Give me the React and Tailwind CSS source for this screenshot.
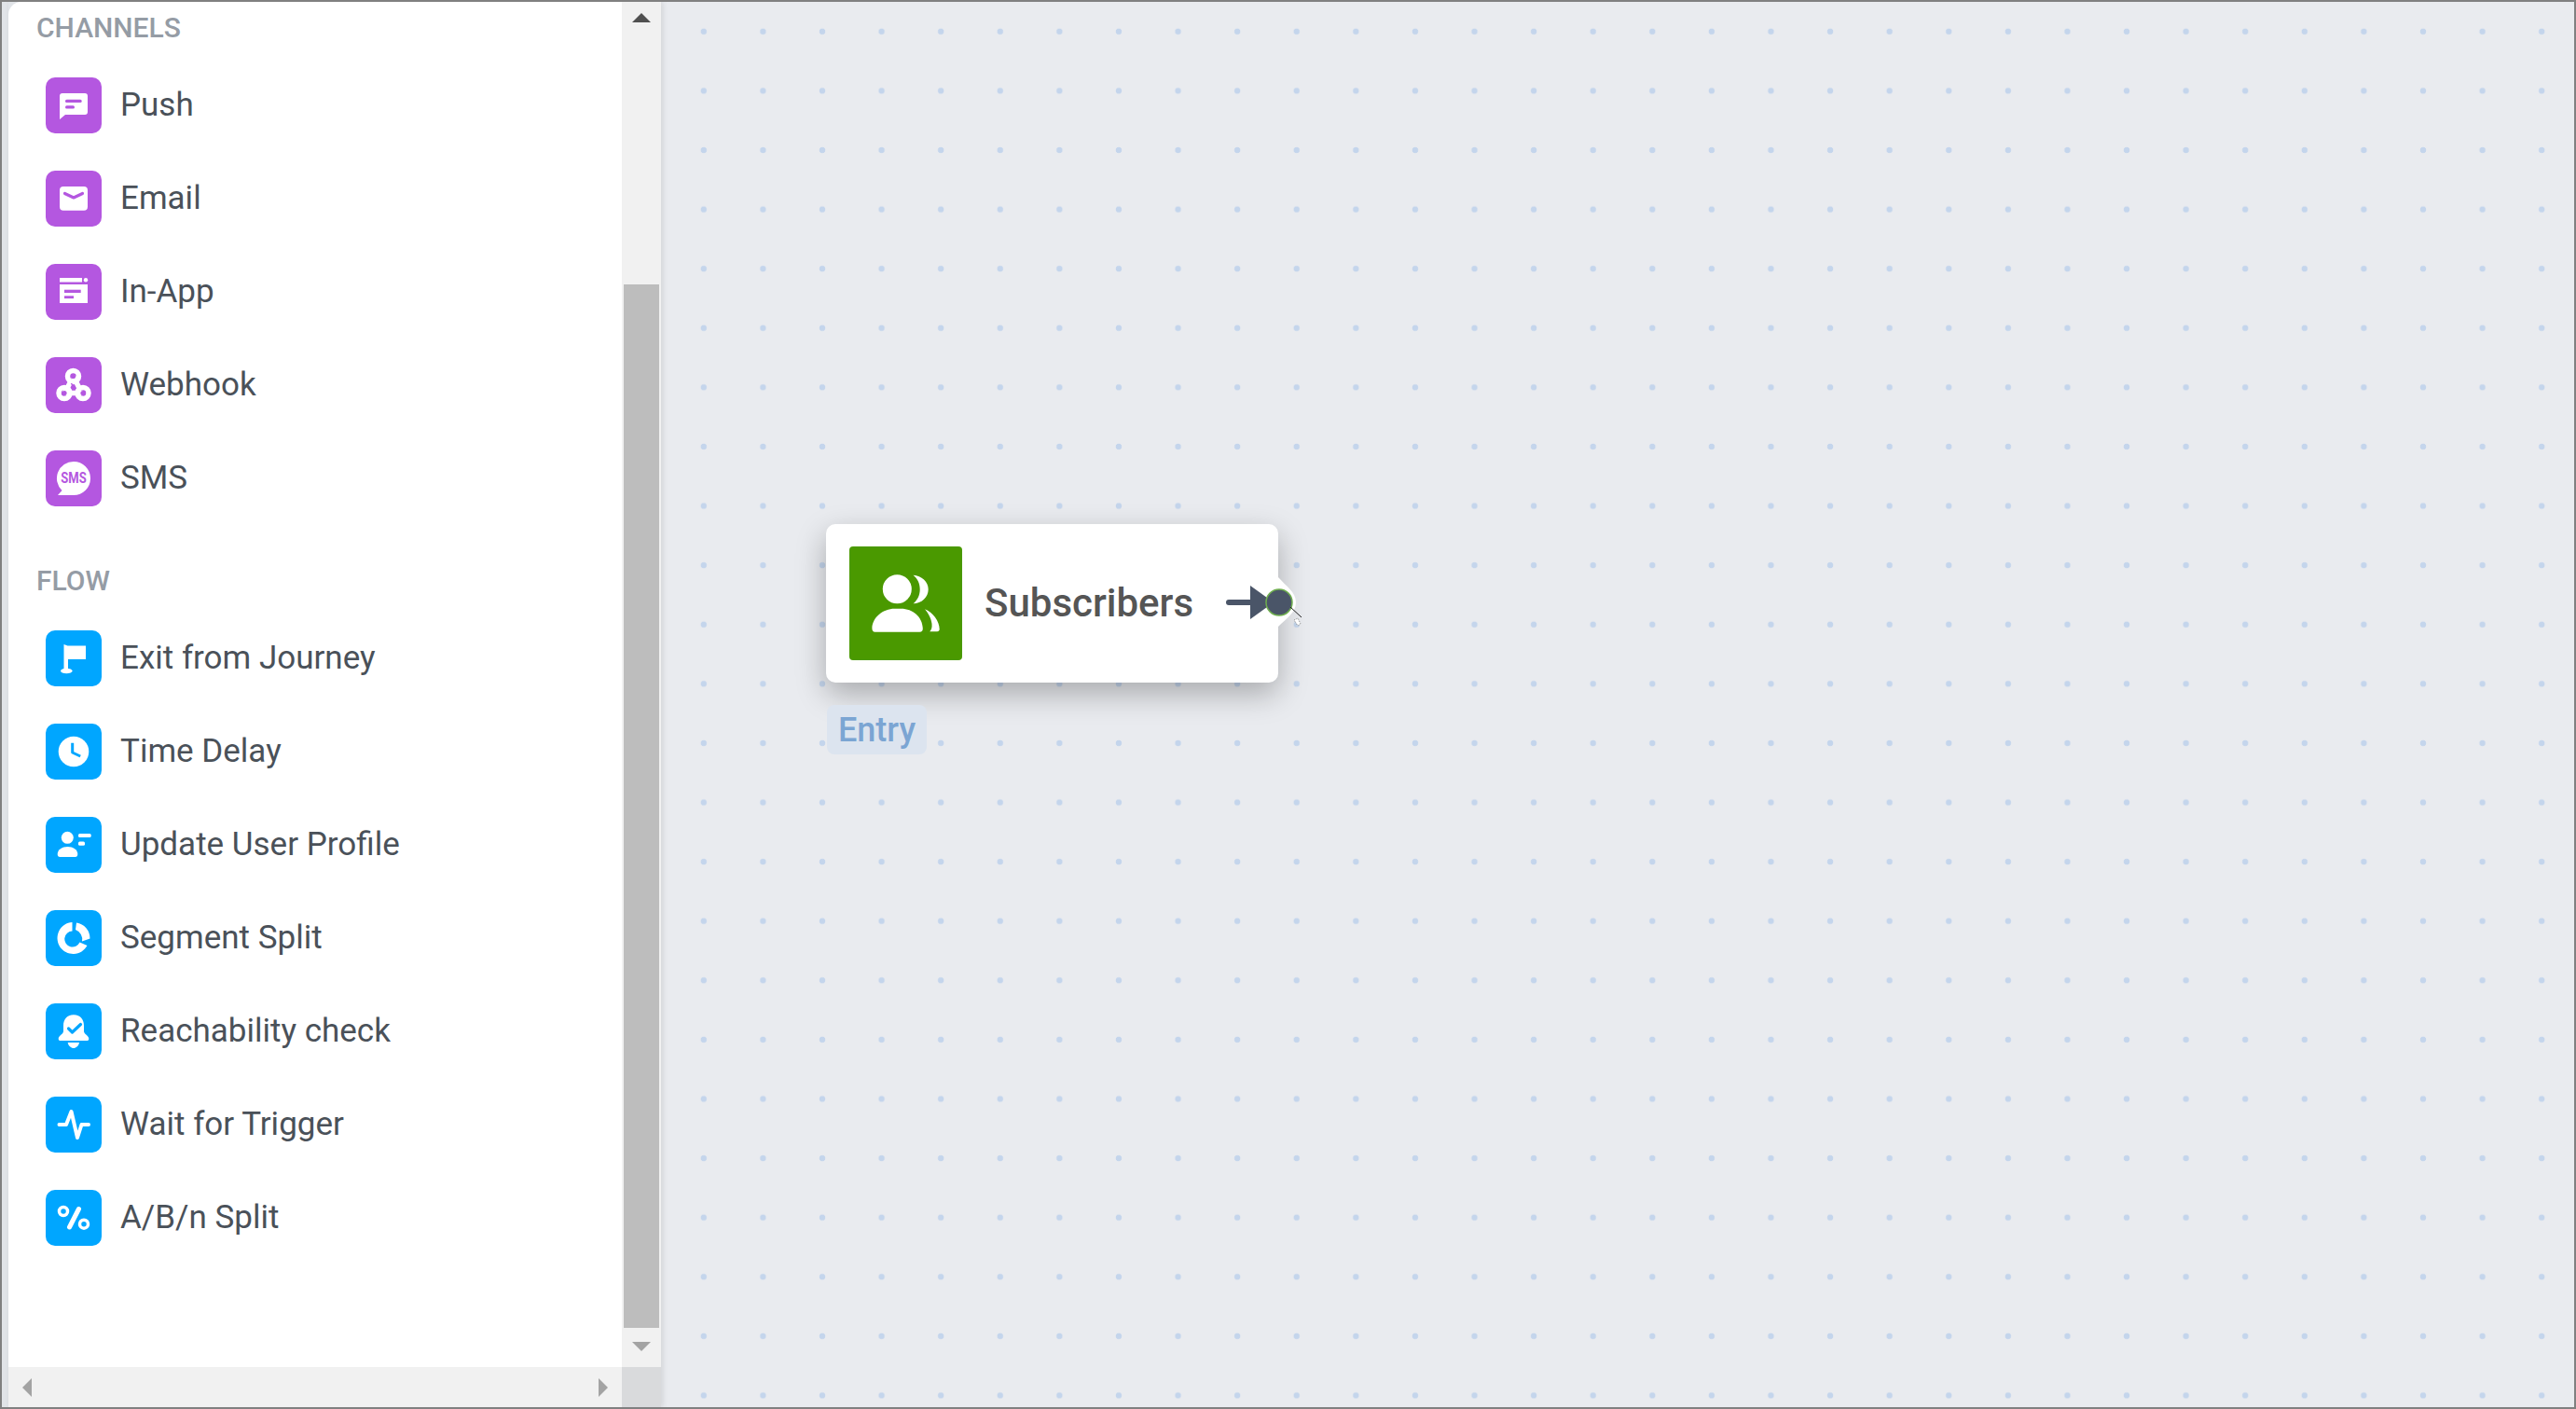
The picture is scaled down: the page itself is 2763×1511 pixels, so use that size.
const P = "#b457e0";
const B = "#00a6ff";

function Ico({ children }) {
  return (
    <svg viewBox="0 0 60 60" width="60" height="60" className="block">
      {children}
    </svg>
  );
}

const PushI = () => (
  <Ico>
    <path d="M15 20a3 3 0 0 1 3-3h24a3 3 0 0 1 3 3v17a3 3 0 0 1-3 3H21l-6 5z" fill="#fff" />
    <rect x="21" y="23.700" width="17.700" height="3.300" rx="1.600" fill={P} />
    <rect x="21" y="30.300" width="10" height="3.300" rx="1.600" fill={P} />
  </Ico>
);
const EmailI = () => (
  <Ico>
    <rect x="15" y="17" width="30" height="25.700" rx="4" fill="#fff" />
    <path d="M20.500 24.500l9.500 4.500 9.500-4.500" fill="none" stroke={P} strokeWidth="3.200" strokeLinecap="round" strokeLinejoin="round" />
  </Ico>
);
const InAppI = () => (
  <Ico>
    <rect x="15" y="15" width="24" height="4.500" fill="#fff" />
    <circle cx="43" cy="17.200" r="2.200" fill="#fff" />
    <rect x="15" y="22" width="30" height="20" fill="#fff" />
    <rect x="20" y="27.700" width="17.700" height="3.300" fill={P} />
    <rect x="20" y="34.300" width="10" height="2.800" fill={P} />
  </Ico>
);
const WebhookI = () => (
  <Ico>
    <g fill="none" stroke="#fff" strokeWidth="5.500">
      <circle cx="29.500" cy="20.500" r="6" />
      <circle cx="20" cy="38.500" r="6" />
      <circle cx="40" cy="38.500" r="6" />
      <path d="M27 26L20 38.500" />
      <path d="M20 38.500H40" />
      <path d="M29.500 20.500L36 33" />
    </g>
    <path d="M30.500 33.500L27.500 28" fill="none" stroke={P} strokeWidth="1.500" />
    <circle cx="29.500" cy="20.500" r="2.600" fill={P} />
    <circle cx="20" cy="38.500" r="2.600" fill={P} />
    <circle cx="40" cy="38.500" r="2.600" fill={P} />
  </Ico>
);
const SmsI = () => (
  <div className="relative w-[60px] h-[60px]">
    <Ico>
      <path d="M30 12a18 18 0 0 1 0 36H13l4.500-5A18 18 0 0 1 30 12z" fill="#fff" />
    </Ico>
    <span className="absolute inset-x-0 top-[22px] text-center text-[13px] leading-[16px] font-bold scale-y-[1.3] font-['Roboto',sans-serif] text-[#b457e0]">SMS</span>
  </div>
);
const FlagI = () => (
  <Ico>
    <path d="M19.500 15l4 1.500H43V31H24V42h-4.500z" fill="#fff" />
    <ellipse cx="22.300" cy="43.500" rx="6.300" ry="2.800" fill="#fff" />
  </Ico>
);
const ClockI = () => (
  <Ico>
    <circle cx="30" cy="30" r="16.300" fill="#fff" />
    <path d="M28.700 20.700V31l8.500 4" fill="none" stroke={B} strokeWidth="3" strokeLinejoin="round" />
  </Ico>
);
const UserI = () => (
  <Ico>
    <circle cx="23.300" cy="22.300" r="6.500" fill="#fff" />
    <path d="M12.700 40c0-5 5-8 10.800-8s10.800 3 10.800 8c0 2-1 3-2.500 3H15.200c-1.500 0-2.500-1-2.500-3z" fill="#fff" />
    <rect x="35" y="18" width="13.700" height="4" rx="1.500" fill="#fff" />
    <rect x="35" y="26.500" width="7" height="4.200" rx="1.500" fill="#fff" />
  </Ico>
);
const SegmentI = () => (
  <Ico>
    <path d="M28.500 13v9.500a8.500 8.500 0 1 0 8 12l8 3.500A17 17 0 1 1 28.500 13z" fill="#fff" />
    <path d="M33 13.500A17 17 0 0 1 47.500 30.500l-8.500 3a11 11 0 0 0-7-12.500z" fill="#fff" />
  </Ico>
);
const BellI = () => (
  <Ico>
    <path d="M30 12.300c7.500 0 11 5.200 11 11.700v6c0 3 5.300 4.500 5.300 8 0 1.500-1 2-2 2H15.700c-1 0-2-.5-2-2 0-3.500 5.300-5 5.300-8v-6c0-6.500 3.500-11.700 11-11.700z" fill="#fff" />
    <path d="M23.700 42h12.300c-.5 3.500-3.500 6-6.100 6s-5.700-2.500-6.200-6z" fill="#fff" />
    <path d="M24.500 27l4 4 9-8.500" fill="none" stroke={B} strokeWidth="3.200" strokeLinecap="round" strokeLinejoin="round" />
  </Ico>
);
const PulseI = () => (
  <Ico>
    <path d="M14.500 30H22L27.500 16L34 44L38.500 30H46" fill="none" stroke="#fff" strokeWidth="4" strokeLinecap="round" strokeLinejoin="round" />
  </Ico>
);
const PercentI = () => (
  <Ico>
    <circle cx="19" cy="23" r="4.500" fill="none" stroke="#fff" strokeWidth="3.500" />
    <circle cx="41" cy="36.700" r="4.500" fill="none" stroke="#fff" strokeWidth="3.500" />
    <path d="M35.500 20.500L25.500 40" stroke="#fff" strokeWidth="5" strokeLinecap="round" />
  </Ico>
);

const channels = [
  ["Push", PushI],
  ["Email", EmailI],
  ["In-App", InAppI],
  ["Webhook", WebhookI],
  ["SMS", SmsI],
];
const flow = [
  ["Exit from Journey", FlagI],
  ["Time Delay", ClockI],
  ["Update User Profile", UserI],
  ["Segment Split", SegmentI],
  ["Reachability check", BellI],
  ["Wait for Trigger", PulseI],
  ["A/B/n Split", PercentI],
];

function Row({ label, Icon, purple }) {
  return (
    <div className="h-[100px] flex items-center gap-[20px] pl-[40px]">
      <div className={`w-[60px] h-[60px] rounded-[10px] shrink-0 ${purple ? "bg-[#b457e0]" : "bg-[#00a6ff]"}`}>
        <Icon />
      </div>
      <span className="text-[35px] leading-[44px] text-[#4a5159]">{label}</span>
    </div>
  );
}

function Tri({ dir, color, w = 20, h = 10 }) {
  const pts = {
    up: `0,${h} ${w / 2},0 ${w},${h}`,
    down: `0,0 ${w},0 ${w / 2},${h}`,
    left: `${h},0 ${h},${w} 0,${w / 2}`,
    right: `0,0 0,${w} ${h},${w / 2}`,
  }[dir];
  const vert = dir === "up" || dir === "down";
  return (
    <svg width={vert ? w : h} height={vert ? h : w} className="block shrink-0">
      <polygon points={pts} fill={color} />
    </svg>
  );
}

export default function App() {
  return (
    <div className="w-[2763px] h-[1511px] border-2 border-[#808080] flex bg-[#e9ebef] overflow-hidden font-['Roboto',sans-serif]">
      <div className="w-[7px] shrink-0 bg-[#e1e4e8]" />
      <aside className="w-[700px] shrink-0 flex flex-col bg-[#e1e4e8] shadow-[2px_0_6px_rgba(0,0,0,0.10)] z-10">
        <div className="flex-1 min-h-0 flex">
          <div className="flex-1 bg-white rounded-tl-[14px] overflow-hidden">
            <h2 className="pl-[30px] pt-[10px] h-[46px] text-[30px] leading-[36px] font-medium text-[#959ca5]">CHANNELS</h2>
            <div className="pt-[15px]">
              {channels.map(([l, I]) => (
                <Row key={l} label={l} Icon={I} purple />
              ))}
            </div>
            <h2 className="pl-[30px] mt-[42px] h-[36px] text-[30px] leading-[36px] font-medium text-[#959ca5]">FLOW</h2>
            <div className="pt-[15px]">
              {flow.map(([l, I]) => (
                <Row key={l} label={l} Icon={I} />
              ))}
            </div>
          </div>
          <div className="w-[42px] shrink-0 bg-[#f1f1f1] flex flex-col">
            <div className="h-[303px] flex justify-center pt-[12px]">
              <Tri dir="up" color="#505050" />
            </div>
            <div className="flex-1 mx-[2px] bg-[#bdbdbd]" />
            <div className="h-[42px] flex justify-center pt-[15px]">
              <Tri dir="down" color="#a3a3a3" />
            </div>
          </div>
        </div>
        <div className="h-[43px] shrink-0 flex">
          <div className="flex-1 bg-[#f1f1f1] flex items-center justify-between pl-[15px] pr-[15px]">
            <Tri dir="left" color="#a3a3a3" />
            <Tri dir="right" color="#a3a3a3" />
          </div>
          <div className="w-[42px] shrink-0 bg-[#d9dadc]" />
        </div>
      </aside>

      <main className="relative flex-1 bg-[#e9ebef] bg-[radial-gradient(circle_at_center,#c4d5ec_0,#c4d5ec_3px,transparent_3.600px)] bg-[size:63.600px_63.600px] bg-[position:14px_0px]">
        <div className="absolute left-[177px] top-[560px] w-[485px] h-[170px] bg-white rounded-[10px] shadow-[0_12px_32px_rgba(0,0,0,0.28)] flex items-center pl-[25px]">
          <div className="w-[121px] h-[122px] rounded-[4px] bg-[#4a9900] shrink-0">
            <svg viewBox="0 0 121 122" width="121" height="122" className="block">
              <circle cx="51.300" cy="45.700" r="15.500" fill="#fff" />
              <path d="M24.400 88c0-12 12-21.300 24-21.300h7c13 0 23 9 23.400 21 .1 2.500-1 4-3.400 4H27.500c-2 0-3.100-1.500-3.100-3.700z" fill="#fff" />
              <path d="M68.500 30.700c9 1 16.200 6.800 16.200 15.300s-7.200 15.300-16.200 15.300c4.500-3.500 7.200-9 7.200-15.300s-2.700-11.800-7.200-15.300z" fill="#fff" />
              <path d="M81 67.300c8.500 3 15.700 13 15.700 21.500 0 1.500-1 2.500-2.500 2.500h-8c1.500-1.500 2.800-4 2.300-8.300-.6-5.500-3.700-11.200-7.500-15.700z" fill="#fff" />
            </svg>
          </div>
          <span className="ml-[24px] text-[42px] leading-[48px] font-medium text-[#555555]">Subscribers</span>
        </div>

        {/* connection handle lying over the node */}
        <svg className="absolute left-[591px] top-[599px]" width="115" height="90" viewBox="1300 602 115 90">
          <path d="M1371 620C1380 630 1390 636 1390 647C1390 658 1380 664 1371 673z" fill="#fff" />
          <rect x="1315" y="644" width="30" height="6" rx="3" fill="#4a5568" />
          <polygon points="1341,629 1341,665 1366,647" fill="#4a5568" />
          <circle cx="1372" cy="647" r="14" fill="#4a5568" stroke="#6fae4f" strokeWidth="1.500" />
          <path d="M1384 652l12 11" stroke="#222" strokeWidth="1" />
          <path d="M1388 666l4-2 3 6-3 2z" fill="#fff" stroke="#444" strokeWidth="0.600" strokeDasharray="1 1" />
        </svg>

        <div className="absolute left-[178px] top-[754px] w-[107px] h-[53px] rounded-[8px] bg-[#dce4ef] flex items-center justify-center text-[36px] font-medium text-[#7ba5d3]">
          Entry
        </div>
      </main>
    </div>
  );
}
